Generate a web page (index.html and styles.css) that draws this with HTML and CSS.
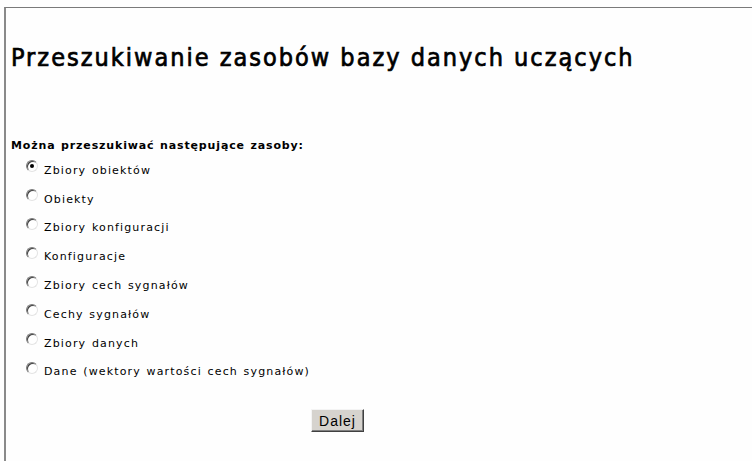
FILE: index.html
```html
<!DOCTYPE html>
<html lang="pl">
<head>
<meta charset="utf-8">
<title>Przeszukiwanie zasobów</title>
<link rel="stylesheet" href="styles.css">
</head>
<body>
<div class="frame">
  <h1 class="title">Przeszukiwanie zasobów bazy danych uczących</h1>
  <form class="search">
    <p class="lead">Można przeszukiwać następujące zasoby:</p>
    <ul class="options">
      <li><label><input type="radio" name="zasob" checked><span>Zbiory obiektów</span></label></li>
      <li><label><input type="radio" name="zasob"><span>Obiekty</span></label></li>
      <li><label><input type="radio" name="zasob"><span>Zbiory konfiguracji</span></label></li>
      <li><label><input type="radio" name="zasob"><span>Konfiguracje</span></label></li>
      <li><label><input type="radio" name="zasob"><span>Zbiory cech sygnałów</span></label></li>
      <li><label><input type="radio" name="zasob"><span>Cechy sygnałów</span></label></li>
      <li><label><input type="radio" name="zasob"><span>Zbiory danych</span></label></li>
      <li><label><input type="radio" name="zasob"><span>Dane (wektory wartości cech sygnałów)</span></label></li>
    </ul>
    <div class="actions"><button type="button" class="next">Dalej</button></div>
  </form>
</div>
</body>
</html>
```
FILE: styles.css
```css
html, body {
  margin: 0;
  background: #fefefe;
}
body {
  padding: 7px 0 0 4px;
  height: 461px;
  box-sizing: border-box;
  overflow: hidden;
}
.frame {
  border-top: 1px solid #7a7a7a;
  border-left: 2px solid #8a8a8a;
  height: 100%;
  padding-left: 5px;
  font-family: "DejaVu Sans", Verdana, sans-serif;
  color: #000;
}
.title {
  margin: 0;
  padding-top: 35px;
  font-family: "DejaVu Sans Condensed", "DejaVu Sans", sans-serif;
  font-weight: normal;
  font-size: 25px;
  line-height: 30px;
  letter-spacing: 2px;
  -webkit-text-stroke: 0.7px #000;
}
.search {
  margin-top: 66px;
}
.lead {
  margin: 0;
  font-size: 11px;
  font-weight: bold;
  line-height: 13px;
  letter-spacing: 0.85px;
  word-spacing: 1px;
}
.options {
  list-style: none;
  margin: 4px 0 0;
  padding: 0 0 0 15px;
}
.options li {
  height: 28.8px;
  display: flex;
  align-items: center;
}
.options label {
  display: flex;
  align-items: center;
  font-size: 11px;
  letter-spacing: 1.15px;
  word-spacing: 1px;
}
.options input {
  appearance: none;
  -webkit-appearance: none;
  box-sizing: border-box;
  margin: 0 6px 0 0;
  width: 12px;
  height: 12px;
  border-radius: 50%;
  border: 1px solid;
  border-color: #7a7a7a #e4e4e4 #e4e4e4 #7a7a7a;
  box-shadow: inset 1px 1px 0 #404040;
  background: #fff;
  position: relative;
  top: -4px;
  display: grid;
  place-items: center;
}
.options input:checked::after {
  content: "";
  width: 4px;
  height: 4px;
  border-radius: 50%;
  background: #000;
}
.actions {
  padding-left: 300px;
  margin-top: 23px;
}
.next {
  font-family: "Liberation Sans", Arial, sans-serif;
  font-size: 14px;
  height: 23px;
  width: 53px;
  padding: 0;
  background: #d6d3ce;
  border: 1px solid;
  border-color: #f4f4f4 #404040 #404040 #f4f4f4;
  box-shadow: inset -1px -1px #808080;
  letter-spacing: 1px;
}
```
